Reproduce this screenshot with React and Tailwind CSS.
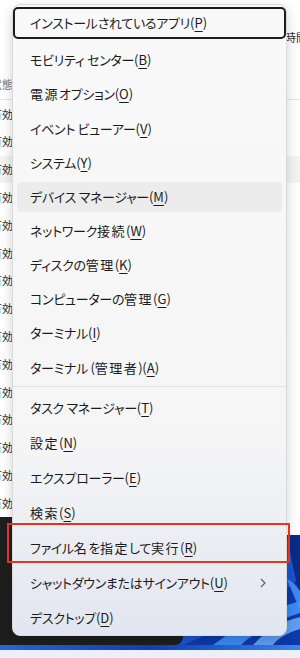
import React from "react";

const font = "font-['Noto_Sans_CJK_JP','Noto_Sans',sans-serif] [font-feature-settings:'palt']";

// top group of the Win+X menu (after the first, focused item)
const groupA = [
  ["モビリティ センター", "B"],
  ["電源オプション", "O"],
  ["イベント ビューアー", "V"],
  ["システム", "Y"],
  ["デバイス マネージャー", "M", "hover"],
  ["ネットワーク接続", "W"],
  ["ディスクの管理", "K"],
  ["コンピューターの管理", "G"],
  ["ターミナル", "I"],
  ["ターミナル (管理者)", "A"],
];

const groupB = [
  ["タスク マネージャー", "T"],
  ["設定", "N"],
  ["エクスプローラー", "E"],
  ["検索", "S"],
  ["ファイル名を指定して実行", "R"],
  ["シャットダウンまたはサインアウト", "U", "sub"],
  ["デスクトップ", "D"],
];

// kanji in Yu Gothic UI run a little wider than kana, so split the runs
const runs = (text) => text.match(/[\u4e00-\u9fff]+|[^\u4e00-\u9fff]+/g);

const Label = ({ text, k }) => (
  <span className="whitespace-nowrap text-[13px] text-[#1b1b1b]">
    {runs(text).map((r, i) =>
      /[\u4e00-\u9fff]/.test(r) ? (
        <span key={i} className="tracking-[1.5px]">{r}</span>
      ) : (
        <span key={i} className="tracking-[-0.3px]">{r}</span>
      )
    )}
    (<span className="underline underline-offset-[3px] decoration-1">{k}</span>)
  </span>
);

const Item = ({ text, k, kind, h }) => (
  <div className={`${h} flex py-[2px]`}>
    <div
      className={`flex flex-1 items-center rounded-[4px] pl-[13px] pr-[16px] ${
        kind === "hover" ? "bg-[#ececec]" : ""
      }`}
    >
      <Label text={text} k={k} />
      {kind === "sub" && (
        <svg className="ml-auto" width="6" height="10" viewBox="0 0 6 10">
          <path d="M1 1l4 4-4 4" fill="none" stroke="#5a5a5a" strokeWidth="1.1" />
        </svg>
      )}
    </div>
  </div>
);

// bloom wallpaper seen to the right of the dark window
const Bloom = () => (
  <svg width="117" height="128" viewBox="0 0 117 128" className="block shrink-0">
    <rect width="117" height="128" fill="#1a55d0" />
    <path d="M0 128 C40 110 80 95 117 60 L117 128Z" fill="#0d3aa8" />
    <path d="M30 128 C60 105 90 92 117 84 L117 96 C92 104 70 116 58 128Z" fill="#3b8af5" />
    <path d="M70 128 C85 112 100 104 117 100 L117 112 C104 116 94 122 90 128Z" fill="#6fb0ff" opacity="0.85" />
    <path d="M104 18 C108 40 112 60 117 80 L117 18 Z" fill="#0a2a86" />
    <path d="M104 62 C109 75 113 84 117 92 L117 74 C113 68 109 64 104 62Z" fill="#4a95ff" opacity="0.85" />
    <rect x="104" y="0" width="13" height="18" fill="#ffffff" />
  </svg>
);

export default function App() {
  const bgRows = Array.from({ length: 15 });
  return (
    <div className={`relative h-[658px] w-[300px] overflow-hidden bg-white ${font}`}>
      {/* window behind the menu */}
      <div className="h-[517px] bg-white text-[11px] text-[#2b2b2b]">
        <div className="flex h-[70px] items-center justify-end pt-[4px]">
          <span className="mr-[-7px] whitespace-nowrap">時間</span>
        </div>
        <div className="flex h-[30px] items-center border-b border-[#e6e6e6]">
          <div className="flex w-[13px] justify-end">
            <span className="whitespace-nowrap text-[#777]">状態</span>
          </div>
        </div>
        {bgRows.map((_, i) => (
          <div
            key={i}
            className={`flex h-[27.8px] items-center ${i === 2 ? "bg-[#f3f3f3]" : ""}`}
          >
            <div className="flex w-[13px] justify-end">
              <span className="whitespace-nowrap">有効</span>
            </div>
          </div>
        ))}
      </div>

      {/* desktop: dark window on the bloom wallpaper */}
      <div className="flex h-[128px] bg-[#1a55d0]">
        <div className="h-[128px] w-[183px] shrink-0 rounded-br-lg bg-[#1e1e1e]" />
        <Bloom />
      </div>
      <div className="h-[5px] bg-linear-to-r from-[#2a66dc] via-[#0f3fb3] to-[#3c86f0]" />
      <div className="h-[8px] bg-[#eceff5]" />

      {/* Win+X menu */}
      <div className="absolute left-[12px] top-[4px] flex h-[632px] w-[275px] flex-col rounded-[8px] border border-[#dadada] bg-linear-to-b from-[#f9f9f9] via-[#f5f5f6] via-70% to-[#e2e6f0] px-[4px] pt-[1px] shadow-[0_4px_12px_rgba(0,0,0,0.18)]">
        <div className="-mx-[4px] flex h-[34px] py-[1px]">
          <div className="flex flex-1 items-center rounded-[5px] border-2 border-[#1c1c1c] pl-[15px]">
            <Label text="インストールされているアプリ" k="P" />
          </div>
        </div>
        <div className="h-[3px]" />
        {groupA.map(([t, k, kind]) => (
          <Item key={k} text={t} k={k} kind={kind} h="h-[34.2px]" />
        ))}
        <div className="-mx-[4px] mb-[3px] mt-[2px] h-px bg-[#e3e3e3]" />
        {groupB.map(([t, k, kind]) => (
          <Item key={k} text={t} k={k} kind={kind} h="h-[35px]" />
        ))}
      </div>

      {/* red annotation box */}
      <div className="absolute left-[7px] top-[523px] h-[40px] w-[283px] border-2 border-[#e8321c]" />
    </div>
  );
}
